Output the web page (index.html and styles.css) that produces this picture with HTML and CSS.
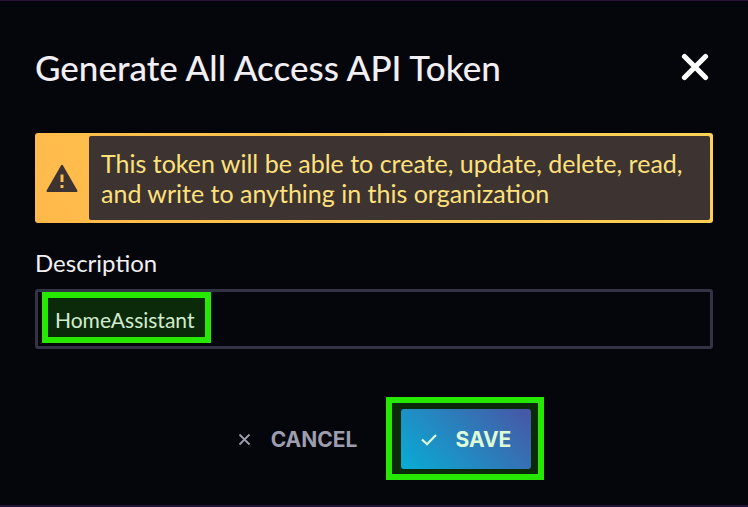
FILE: index.html
```html
<!DOCTYPE html>
<html lang="en">
<head>
<meta charset="utf-8">
<meta name="viewport" content="width=device-width, initial-scale=1">
<title>Generate All Access API Token</title>
<link rel="stylesheet" href="styles.css">
</head>
<body>
<main class="overlay" role="dialog" aria-labelledby="title">
  <header class="header">
    <h1 class="title" id="title">Generate All Access API Token</h1>
    <button class="close" type="button" aria-label="Close">
      <svg width="28" height="28" viewBox="0 0 28 28" aria-hidden="true"><path d="M3.500 3.500L24.500 24.500M24.500 3.500L3.500 24.500" fill="none" stroke="currentColor" stroke-width="5.200" stroke-linecap="round"/></svg>
    </button>
  </header>
  <form class="form">
    <div class="alert" role="alert">
      <div class="alert-icon">
        <svg width="32" height="28" viewBox="0 0 32 28" aria-hidden="true"><path fill="currentColor" fill-rule="evenodd" d="M15 1.400Q16 .2 17 1.400L31.400 26.500Q31.700 28 30.500 28H1.500Q.3 28 .6 26.500ZM14.500 10.500V18H17.500V10.500ZM14.500 21V24H17.500V21Z"/></svg>
      </div>
      <p class="alert-text">This token will be able to create, update, delete, read, and write to anything in this organization</p>
    </div>
    <label class="label" for="description">Description</label>
    <div class="field">
      <input class="input" id="description" type="text" value="HomeAssistant">
    </div>
    <div class="actions">
      <button class="button cancel" type="button">
        <svg width="16" height="16" viewBox="0 0 16 16" aria-hidden="true"><path d="M2.500 3.500L12.500 13.500M12.500 3.500L2.500 13.500" fill="none" stroke="currentColor" stroke-width="1.800"/></svg>
        Cancel
      </button>
      <button class="button save" type="submit">
        <svg width="16" height="16" viewBox="0 0 16 16" aria-hidden="true"><path d="M1 8.500L6 13.200L15 4" fill="none" stroke="currentColor" stroke-width="2.200"/></svg>
        Save
      </button>
    </div>
  </form>
</main>
</body>
</html>
```
FILE: styles.css
```css
* {
  box-sizing: border-box;
}

body {
  margin: 0;
  background: #05060b;
  color: #f1eff3;
  font-family: Lato, "Liberation Sans", sans-serif;
}

.overlay {
  min-height: 100vh;
  padding: 34px 35px;
  border-top: 1px solid #26123c;
  border-bottom: 2px solid #211336;
}

.header {
  display: flex;
  align-items: center;
  justify-content: space-between;
  height: 64px;
  margin-bottom: 34px;
}

.title {
  margin: 0;
  font-size: 35px;
  font-weight: 500;
  line-height: 40px;
}

.close {
  display: flex;
  padding: 4px;
  border: 0;
  background: none;
  color: #fff;
}

.alert {
  display: flex;
  padding: 3px 3px 3px 0;
  border-radius: 3px;
  background: linear-gradient(45deg, #ffb94a, #ffd255);
}

.alert-icon {
  display: flex;
  flex: none;
  align-items: center;
  justify-content: center;
  width: 54px;
  color: #3d3330;
}

.alert-text {
  flex: 1;
  margin: 0;
  padding: 12px;
  border-radius: 2px;
  background: #3d3330;
  color: #ffe17c;
  font-size: 25px;
  line-height: 30px;
}

.label {
  display: block;
  margin: 24px 0 10px;
  font-size: 24px;
  line-height: 32px;
}

.field {
  position: relative;
}

.input {
  display: block;
  width: 100%;
  height: 60px;
  padding: 0 17px;
  border: 3px solid #333346;
  border-radius: 3px;
  background: #05060b;
  color: #f1eff3;
  font: inherit;
  font-size: 21px;
  outline: 0;
}

.field::after,
.save::after {
  content: "";
  position: absolute;
  box-sizing: border-box;
  border: 6px solid #26e800;
  background: rgb(38 232 0 / 16%);
  pointer-events: none;
}

.field::after {
  top: 3px;
  left: 7px;
  width: 169px;
  height: 51px;
}

.actions {
  display: flex;
  justify-content: center;
  gap: 24px;
  margin-top: 60px;
}

.button {
  display: flex;
  align-items: center;
  gap: 18px;
  height: 60px;
  padding: 0 20px;
  border: 0;
  border-radius: 3px;
  font-family: Inter, "Liberation Sans", sans-serif;
  font-size: 21px;
  font-weight: 700;
  text-transform: uppercase;
}

.cancel {
  background: none;
  color: #9e9dad;
}

.save {
  position: relative;
  background: linear-gradient(45deg, #03a3ff, #5139c4);
  color: #fff;
}

.save::after {
  inset: -12px -13px -11px -15px;
}
```
